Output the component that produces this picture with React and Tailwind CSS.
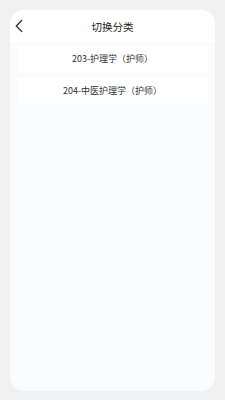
import { ChevronLeft } from "lucide-react";

const items = ["203-护理学（护师）", "204-中医护理学（护师）"];

const App = () => {
  return (
    <div
      className="w-[225px] h-[400px] bg-[#f1f1f2] px-[10px] pt-[10px] pb-[9px] flex"
      style={{ fontFamily: '"Noto Sans CJK SC", "Noto Sans", sans-serif' }}
    >
      <div className="flex-1 flex flex-col bg-[#fafbfd] rounded-[14px] overflow-hidden">
        <div className="relative h-[32px] bg-white flex items-center justify-center">
          <ChevronLeft
            className="absolute left-[-2px] top-[5px] text-[#333]"
            size={22}
            strokeWidth={1.4}
          />
          <h1 className="text-[10.5px] text-[#222] font-normal pt-[2px]">切换分类</h1>
        </div>
        <div className="flex flex-col gap-[6px] px-[7px] pt-[4px]">
          {items.map((item) => (
            <div
              key={item}
              className="h-[26px] bg-white rounded-[3px] flex items-center justify-center text-[9px] text-[#333]"
            >
              {item}
            </div>
          ))}
        </div>
      </div>
    </div>
  );
};

export default App;
